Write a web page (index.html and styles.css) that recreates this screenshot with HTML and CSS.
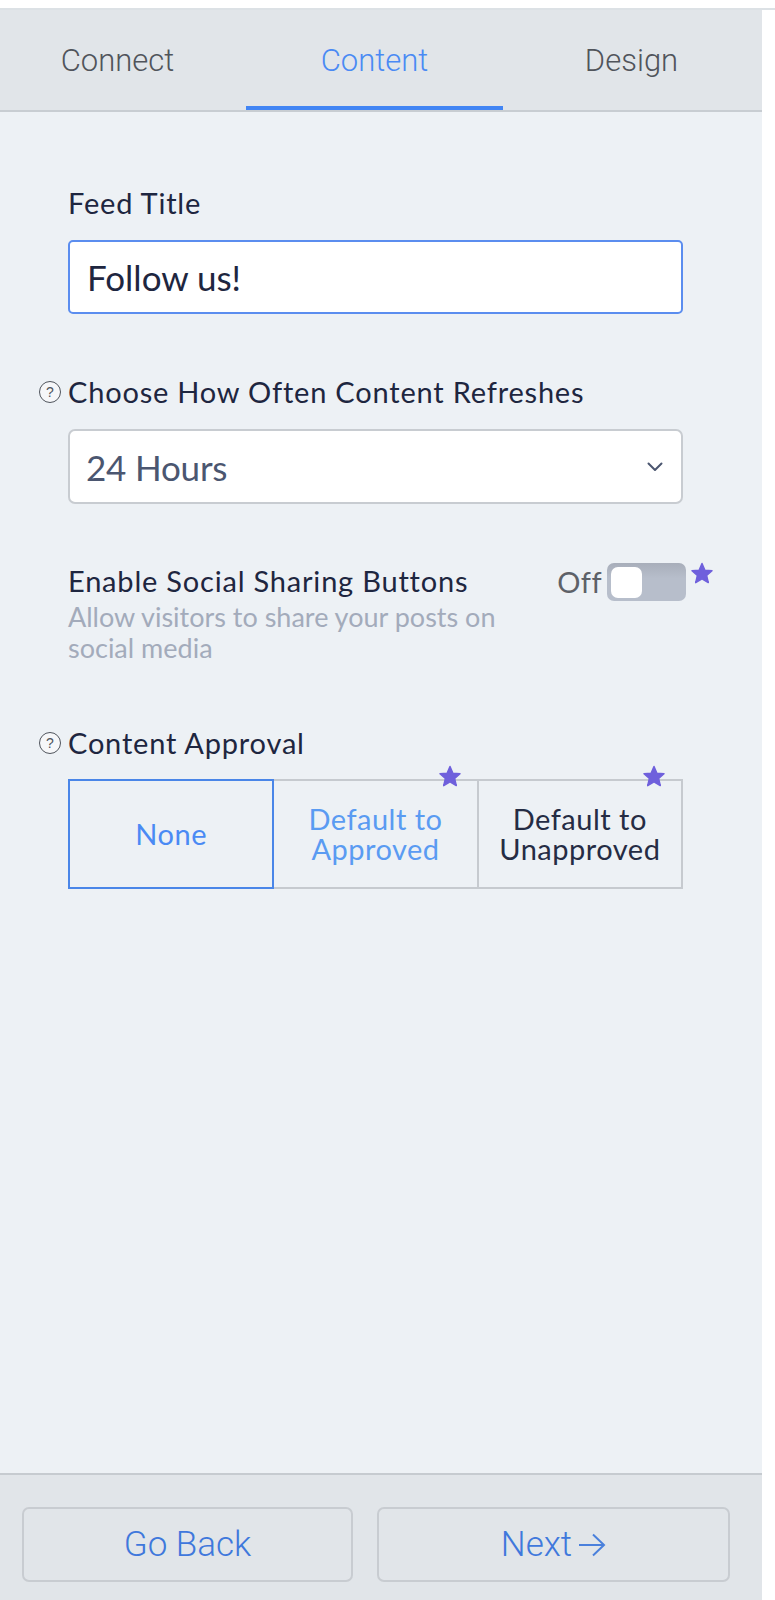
FILE: index.html
```html
<!DOCTYPE html>
<html lang="en">
<head>
<meta charset="utf-8">
<title>Feed Settings - Content</title>
<link rel="stylesheet" href="styles.css">
</head>
<body>
<div class="topline"></div>
<div class="panel">
  <nav class="tabs">
    <div class="tab">Connect</div>
    <div class="tab active">Content</div>
    <div class="tab">Design</div>
  </nav>

  <main class="content">
    <section class="field">
      <div class="label">Feed Title</div>
      <div class="input">Follow us!</div>
    </section>

    <section class="field field-refresh">
      <div class="label with-help"><span class="help">?</span><span>Choose How Often Content Refreshes</span></div>
      <div class="select">
        <span>24 Hours</span>
        <svg class="chevron" width="16" height="10" viewBox="0 0 16 10"><polyline points="1.5,1.5 8,8 14.5,1.5" fill="none" stroke="#4b5670" stroke-width="2" stroke-linecap="round" stroke-linejoin="round"/></svg>
      </div>
    </section>

    <section class="share">
      <div class="share-text">
        <div class="label">Enable Social Sharing Buttons</div>
        <div class="hint">Allow visitors to share your posts on<br>social media</div>
      </div>
      <div class="share-ctrl">
        <span class="off">Off</span>
        <span class="toggle">
          <span class="knob"></span>
          <svg class="star star-toggle" width="24" height="23" viewBox="0 0 24 23"><polygon points="12,1.5 14.9,8.2 22,8.8 16.6,13.5 18.3,20.6 12,16.8 5.7,20.6 7.4,13.5 2,8.8 9.1,8.2" fill="#6f60dc" stroke="#6f60dc" stroke-width="1.5" stroke-linejoin="round"/></svg>
        </span>
      </div>
    </section>

    <section class="field field-approval">
      <div class="label with-help"><span class="help">?</span><span>Content Approval</span></div>
      <div class="options">
        <div class="opt opt-active">None</div>
        <div class="opt opt-blue"><span class="opt-text">Default to<br>Approved</span>
          <svg class="star star-opt" width="24" height="23" viewBox="0 0 24 23"><polygon points="12,1.5 14.9,8.2 22,8.8 16.6,13.5 18.3,20.6 12,16.8 5.7,20.6 7.4,13.5 2,8.8 9.1,8.2" fill="#6f60dc" stroke="#6f60dc" stroke-width="1.5" stroke-linejoin="round"/></svg>
        </div>
        <div class="opt opt-dark"><span class="opt-text">Default to<br>Unapproved</span>
          <svg class="star star-opt" width="24" height="23" viewBox="0 0 24 23"><polygon points="12,1.5 14.9,8.2 22,8.8 16.6,13.5 18.3,20.6 12,16.8 5.7,20.6 7.4,13.5 2,8.8 9.1,8.2" fill="#6f60dc" stroke="#6f60dc" stroke-width="1.5" stroke-linejoin="round"/></svg>
        </div>
      </div>
    </section>
  </main>

  <footer class="footer">
    <button class="btn btn-back">Go Back</button>
    <button class="btn btn-next">Next<svg class="arrow" width="28" height="24" viewBox="0 0 28 24"><line x1="1" y1="12" x2="26" y2="12" stroke="#4a80dc" stroke-width="2"/><polyline points="15,1.5 26,12 15,22.5" fill="none" stroke="#4a80dc" stroke-width="2"/></svg></button>
  </footer>
</div>
</body>
</html>
```
FILE: styles.css
```css
* { box-sizing: border-box; }

html, body {
  margin: 0;
  padding: 0;
  background: #ffffff;
}

body {
  padding-top: 8px;
  font-family: "Lato", "Open Sans", sans-serif;
  font-weight: 400;
}

.topline {
  height: 2px;
  background: #dce1e5;
}

.panel {
  width: 762px;
  height: 1590px;
  display: flex;
  flex-direction: column;
  overflow: hidden;
  background: #edf1f5;
}

/* Tabs */
.tabs {
  display: grid;
  grid-template-columns: 257px 257px 257px;
  margin-left: -11px;
  width: 782px;
  background: #e1e5e9;
  border-bottom: 2px solid #c8cdd2;
  flex: 0 0 auto;
}

.tab {
  height: 100px;
  padding-top: 4px;
  border-bottom: 4px solid transparent;
  display: flex;
  align-items: center;
  justify-content: center;
  font-family: "Roboto", "Liberation Sans", sans-serif;
  font-size: 31px;
  font-weight: 300;
  color: #50545b;
}

.tab.active {
  color: #4a8af4;
  border-bottom-color: #4285f4;
}

/* Content */
.content {
  flex: 1 1 auto;
  padding: 73px 79px 0 68px;
}

.label {
  font-size: 29px;
  line-height: 36px;
  letter-spacing: 0.8px;
  color: #1e2640;
}

.with-help {
  display: flex;
  align-items: center;
  margin-left: -29px;
}

.help {
  width: 22px;
  height: 22px;
  margin-right: 7px;
  border: 1.5px solid #50555d;
  border-radius: 50%;
  display: inline-flex;
  align-items: center;
  justify-content: center;
  font-family: "Liberation Sans", sans-serif;
  font-size: 14px;
  line-height: 1;
  letter-spacing: 0;
  color: #50555d;
  background: #f6f7f9;
  flex: 0 0 auto;
}

.field .label {
  margin-bottom: 19px;
}

.input {
  height: 74px;
  border: 2px solid #5b8def;
  border-radius: 5px;
  background: #ffffff;
  display: flex;
  align-items: center;
  padding-left: 17px;
  font-size: 35px;
  letter-spacing: 0;
  color: #1e2640;
}

.field-refresh {
  margin-top: 60px;
}

.select {
  height: 75px;
  border: 2px solid #c8ccd1;
  border-radius: 7px;
  background: #ffffff;
  display: flex;
  align-items: center;
  justify-content: space-between;
  padding: 0 18px 0 16px;
  font-size: 35px;
  letter-spacing: -0.2px;
  color: #4b5670;
}

.chevron {
  display: block;
}

/* Social sharing */
.share {
  margin-top: 59px;
  display: flex;
  justify-content: space-between;
  align-items: flex-start;
}

.hint {
  margin-top: 2px;
  font-size: 27px;
  line-height: 31px;
  letter-spacing: 0;
  color: #a3abbb;
}

.share-ctrl {
  display: flex;
  align-items: center;
  gap: 5px;
  margin-right: -3px;
}

.off {
  font-size: 29px;
  line-height: 36px;
  letter-spacing: 0.4px;
  color: #5d6168;
}

.toggle {
  position: relative;
  width: 79px;
  height: 38px;
  border-radius: 7px;
  background: linear-gradient(#a8aeba, #b7becb 40%, #b7becb);
  display: flex;
  align-items: center;
  padding-left: 4px;
}

.knob {
  width: 31px;
  height: 31px;
  border-radius: 7px;
  background: #ffffff;
}

.star {
  display: block;
}

.star-toggle {
  position: absolute;
  left: 83px;
  top: -1px;
}

/* Content approval */
.field-approval {
  margin-top: 62px;
}

.field-approval .label {
  margin-bottom: 18px;
}

.options {
  display: flex;
  width: 615px;
}

.opt {
  position: relative;
  flex: 0 0 206.34px;
  height: 110px;
  border: 2px solid #c6cacf;
  display: flex;
  align-items: center;
  justify-content: center;
  text-align: center;
  font-size: 29px;
  line-height: 30px;
  letter-spacing: 0.5px;
}

.opt-text {
  display: block;
}

.opt + .opt {
  margin-left: -2px;
}

.opt-active {
  z-index: 1;
  border-color: #4a86e8;
  color: #4a8af4;
}

.opt-blue {
  color: #5a9bf2;
}

.opt-dark {
  color: #252c44;
}

.star-opt {
  position: absolute;
  right: 15px;
  top: -16px;
}

/* Footer */
.footer {
  flex: 0 0 127px;
  border-top: 2px solid #c6cbd0;
  background: #e1e5e9;
  display: flex;
  gap: 24px;
  padding: 32px 0 0 22px;
}

.btn {
  height: 75px;
  border: 2px solid #c8ccd1;
  border-radius: 7px;
  background: transparent;
  font-family: "Roboto", "Liberation Sans", sans-serif;
  font-size: 35px;
  font-weight: 300;
  color: #3f78dc;
  display: flex;
  align-items: center;
  justify-content: center;
  padding: 0;
}

.btn-back {
  width: 331px;
}

.btn-next {
  width: 353px;
  gap: 6px;
}

.arrow {
  display: block;
}
```
